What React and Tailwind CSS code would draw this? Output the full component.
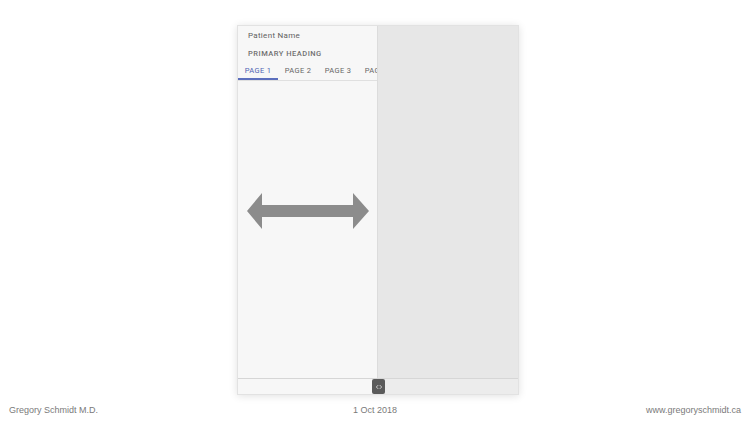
import { ChevronsLeftRight } from 'lucide-react';

const tabs = ['PAGE 1', 'PAGE 2', 'PAGE 3', 'PAGE 4'];

function Arrow() {
  return (
    <svg width="122" height="36" viewBox="0 0 122 36" className="block">
      <polygon
        points="0,18 15,0 15,12 106,12 106,0 122,18 106,36 106,24 15,24 15,36"
        fill="#8c8c8c"
      />
    </svg>
  );
}

export default function App() {
  return (
    <div className="w-[750px] h-[422px] bg-white flex flex-col font-['Roboto',sans-serif] overflow-hidden">
      <div className="mt-[25px] ml-[237px] w-[282px] h-[370px] relative flex flex-col shadow-[0_1px_8px_rgba(0,0,0,0.12)] border border-[#e2e2e2]">
        <div className="flex flex-1 min-h-0">
          <div className="w-[140px] bg-[#f7f7f7] border-r border-[#dcdcdc] flex flex-col overflow-hidden">
            <div className="pl-[10px] pt-[5px] text-[8px] leading-[10px] text-[#5f5f5f] tracking-[0.3px]">
              Patient Name
            </div>
            <div className="pl-[10px] pt-[8px] text-[7.5px] leading-[10px] font-medium text-[#707070] tracking-[0.5px]">
              PRIMARY HEADING
            </div>
            <div className="flex mt-[7px] border-b border-[#e0e0e0] whitespace-nowrap">
              {tabs.map((t, i) => (
                <div
                  key={t}
                  className={
                    i === 0
                      ? 'w-[40px] shrink-0 text-center text-[7.5px] leading-[10px] tracking-[0.3px] pb-[2px] text-[#4f63b3] border-b-2 border-[#5c6fbd]'
                      : 'w-[40px] shrink-0 text-center text-[7.5px] leading-[10px] tracking-[0.3px] pb-[2px] text-[#666666] border-b-2 border-transparent'
                  }
                >
                  {t}
                </div>
              ))}
            </div>
            <div className="flex-1 pl-[9px] pt-[112px]">
              <Arrow />
            </div>
          </div>
          <div className="flex-1 bg-[#e7e7e7]" />
        </div>
        <div className="h-[16px] flex border-t border-[#d6d6d6]">
          <div className="w-[140px] bg-[#f7f7f7]" />
          <div className="flex-1 bg-[#ececec]" />
        </div>
        <div className="absolute left-[134px] bottom-0 w-[13px] h-[15px] rounded-[2px] bg-[#5a5a5a] flex items-center justify-center">
          <ChevronsLeftRight size={8} color="#e0e0e0" strokeWidth={2.5} />
        </div>
      </div>
      <div className="grid grid-cols-3 px-[9px] mt-[10px] text-[9px] leading-[11px] text-[#7a7a7a] font-['Liberation_Sans',Arial,sans-serif]">
        <div>Gregory Schmidt M.D.</div>
        <div className="text-center">1 Oct 2018</div>
        <div className="text-right">www.gregoryschmidt.ca</div>
      </div>
    </div>
  );
}
